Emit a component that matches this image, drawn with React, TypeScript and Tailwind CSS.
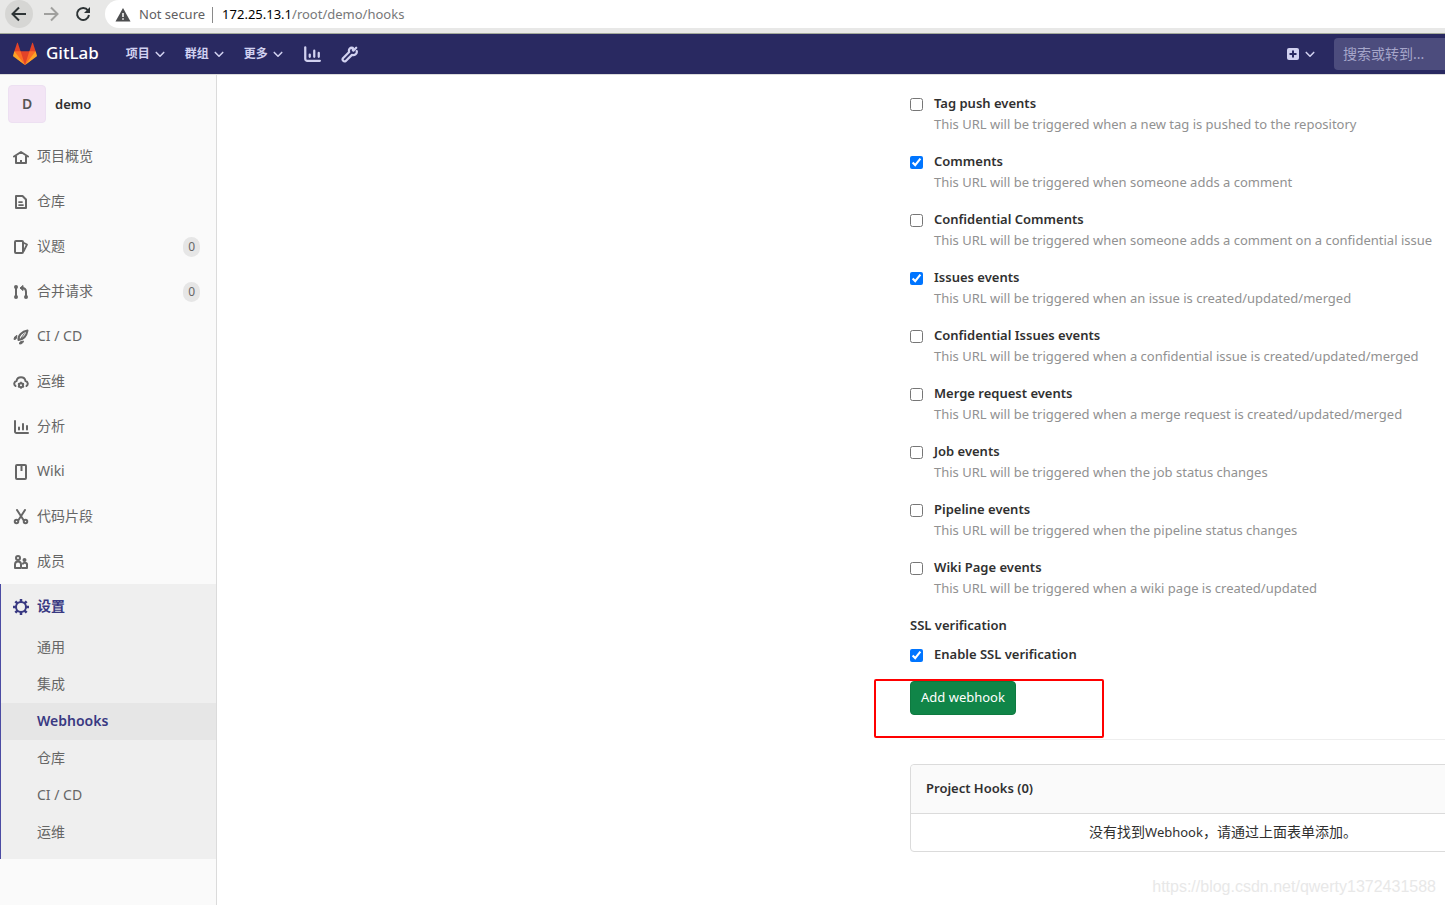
import React, { useState } from 'react';

type IconProps = { children: React.ReactNode; className?: string };

const Icon: React.FC<IconProps> = ({ children, className = 'size-4' }) => (
  <svg
    viewBox="0 0 16 16"
    className={`shrink-0 ${className}`}
    fill="none"
    stroke="currentColor"
    strokeWidth="2"
    aria-hidden="true"
  >
    {children}
  </svg>
);

const ChevronDown = () => (
  <Icon className="size-2.5">
    <path d="M2 5.500l6 6 6-6" strokeWidth="2.500" strokeLinecap="round" strokeLinejoin="round" />
  </Icon>
);

const ChartIcon = ({ className }: { className?: string }) => (
  <Icon className={className}>
    <path d="M2 2v10.500a1.500 1.500 0 0 0 1.500 1.500H15" strokeLinecap="round" />
    <path d="M6 8.500v2M10 5v5.500M14 7v3.500" strokeLinecap="round" />
  </Icon>
);

const icons = {
  home: (
    <Icon>
      <path d="M1 7.500L8 3l7 4.500" strokeLinecap="round" strokeLinejoin="round" />
      <path d="M3 7v7h10V7" strokeLinejoin="round" />
      <path d="M8 11v3" />
    </Icon>
  ),
  file: (
    <Icon>
      <path d="M3 2h6.500L13 5.500V14H3z" strokeLinejoin="round" />
      <path d="M6 8h3M6 11h4" strokeWidth="1.750" strokeLinecap="round" />
    </Icon>
  ),
  issues: (
    <Icon>
      <rect x="2" y="2" width="8" height="12" rx="1" />
      <path d="M10 3.500l4 2L10.500 12.500" strokeWidth="1.750" strokeLinejoin="round" />
    </Icon>
  ),
  merge: (
    <Icon>
      <path d="M3 3v10M13 13V8c0-2.500-1-4-4-4" />
      <circle cx="3" cy="3" r="1" />
      <circle cx="3" cy="13" r="1" />
      <circle cx="13" cy="13" r="1" />
      <path d="M7 4l3-2.500v5z" fill="currentColor" strokeWidth="1" />
    </Icon>
  ),
  rocket: (
    <Icon>
      <path d="M5.500 11C5 6.500 9 2.500 14.500 1.500c-1 5.500-4.500 9-9 9.500z" strokeLinejoin="round" />
      <path d="M8 9l3.500-4.500" strokeWidth="1" />
      <path
        d="M1 10.500C1.200 8.500 2 7 4 6.500L3 10zM6.500 15c2.500 0 3.500-1 4-3L7 13z"
        fill="currentColor"
        strokeWidth="1"
        strokeLinejoin="round"
      />
    </Icon>
  ),
  cloud: (
    <Icon>
      <path
        d="M2.500 12A2.750 2.750 0 0 1 3.500 7a4.600 4.600 0 0 1 9 0 2.750 2.750 0 0 1 1 5"
        strokeLinecap="round"
      />
      <circle cx="8" cy="11.250" r="2" />
      <path d="M8 7.750v1.500M8 13.250v1.500M5 9.500l1.300.75M9.700 12.250l1.300.75M5 13l1.300-.75M9.700 10.250L11 9.500" strokeWidth="1.500" />
    </Icon>
  ),
  chart: <ChartIcon />,
  book: (
    <Icon>
      <rect x="3" y="1" width="10" height="14" rx="1" />
      <path d="M8.500 1v6" strokeWidth="2" />
    </Icon>
  ),
  snippet: (
    <Icon>
      <path d="M4 1l6.500 10M12 1L5.500 11" strokeLinecap="round" />
      <circle cx="3.500" cy="12.500" r="1.750" />
      <circle cx="12.500" cy="12.500" r="1.750" />
    </Icon>
  ),
  users: (
    <Icon>
      <circle cx="5" cy="4" r="2" />
      <path d="M2 14v-3.500a3 3 0 0 1 6 0V14z" strokeLinejoin="round" />
      <circle cx="11.500" cy="6" r="1" />
      <path d="M9 14h5v-2.500a2.250 2.250 0 0 0-4.500-1" strokeLinejoin="round" />
    </Icon>
  ),
  settings: (
    <Icon>
      <circle cx="8" cy="8" r="5" />
      <path
        d="M8 0v3M8 13v3M0 8h3M13 8h3M2.340 2.340l2.120 2.120M11.540 11.540l2.120 2.120M2.340 13.660l2.120-2.120M11.540 4.460l2.120-2.120"
        strokeWidth="2.500"
      />
    </Icon>
  ),
};

const NAV_ITEMS: { label: string; icon: React.ReactNode; count?: number }[] = [
  { label: '项目概览', icon: icons.home },
  { label: '仓库', icon: icons.file },
  { label: '议题', icon: icons.issues, count: 0 },
  { label: '合并请求', icon: icons.merge, count: 0 },
  { label: 'CI / CD', icon: icons.rocket },
  { label: '运维', icon: icons.cloud },
  { label: '分析', icon: icons.chart },
  { label: 'Wiki', icon: icons.book },
  { label: '代码片段', icon: icons.snippet },
  { label: '成员', icon: icons.users },
];

const SETTINGS_ITEMS = ['通用', '集成', 'Webhooks', '仓库', 'CI / CD', '运维'];

const TRIGGERS = [
  { id: 'tag_push', label: 'Tag push events', help: 'This URL will be triggered when a new tag is pushed to the repository', on: false },
  { id: 'note', label: 'Comments', help: 'This URL will be triggered when someone adds a comment', on: true },
  { id: 'confidential_note', label: 'Confidential Comments', help: 'This URL will be triggered when someone adds a comment on a confidential issue', on: false },
  { id: 'issues', label: 'Issues events', help: 'This URL will be triggered when an issue is created/updated/merged', on: true },
  { id: 'confidential_issues', label: 'Confidential Issues events', help: 'This URL will be triggered when a confidential issue is created/updated/merged', on: false },
  { id: 'merge_requests', label: 'Merge request events', help: 'This URL will be triggered when a merge request is created/updated/merged', on: false },
  { id: 'job', label: 'Job events', help: 'This URL will be triggered when the job status changes', on: false },
  { id: 'pipeline', label: 'Pipeline events', help: 'This URL will be triggered when the pipeline status changes', on: false },
  { id: 'wiki_page', label: 'Wiki Page events', help: 'This URL will be triggered when a wiki page is created/updated', on: false },
];

const BrowserBar = () => {
  const [url, setUrl] = useState('/root/demo/hooks');

  return (
    <div className="flex h-[34px] items-start border-b border-[#a3a99a] bg-[#e8e8e7] pl-[5px] text-[13px]">
      <button aria-label="Back" className="flex size-7 items-center justify-center rounded-full bg-[#d6d6d4] text-[#2e3436]">
        <Icon>
          <path d="M15 8H2M8 1.500L1.500 8 8 14.500" />
        </Icon>
      </button>
      <button aria-label="Forward" className="ml-1 flex size-7 items-center justify-center text-[#a0a09e]">
        <Icon>
          <path d="M1 8h13M8 1.500L14.500 8 8 14.500" />
        </Icon>
      </button>
      <button aria-label="Reload" className="ml-1 flex size-7 items-center justify-center text-[#2e3436]">
        <Icon>
          <path d="M13 4.500A6 6 0 1 0 14 9" />
          <path d="M15 1v6H9z" fill="currentColor" stroke="none" />
        </Icon>
      </button>
      <div className="ml-2 flex h-7 flex-1 items-center rounded-l-full bg-white pt-px pl-2.5">
        <svg viewBox="0 0 16 16" className="size-4 shrink-0 fill-[#4c4d4f]" aria-hidden="true">
          <path d="M8 1L.5 14.500h15z" />
          <path d="M7.250 6h1.500v4h-1.500zM7.250 11.250h1.500v1.500h-1.500z" fill="#fff" />
        </svg>
        <span className="ml-2 text-[#5f6062]">Not secure</span>
        <span className="ml-[7px] h-4 w-px bg-[#8a8a8a]" />
        <label htmlFor="address" className="ml-[9px] text-black">
          172.25.13.1
        </label>
        <input
          id="address"
          value={url}
          onChange={(e) => setUrl(e.target.value)}
          className="min-w-0 flex-1 bg-transparent text-[#777879] outline-none"
        />
      </div>
    </div>
  );
};

const GitLabLogo = () => (
  <svg viewBox="0 0 36 36" className="size-6" aria-hidden="true">
    <path fill="#e24329" d="M2 14l9.380 9v-9l-4-12.280c-.205-.632-1.176-.632-1.380 0z" />
    <path fill="#e24329" d="M34 14l-9.380 9v-9l4-12.280c.205-.632 1.176-.632 1.380 0z" />
    <path fill="#e24329" d="M18 34.380L3 14h30z" />
    <path fill="#fc6d26" d="M18 34.380L11.380 14H2l4 11z" />
    <path fill="#fc6d26" d="M18 34.380L24.620 14H34l-4 11z" />
    <path fill="#fca326" d="M2 14L.1 20.160c-.18.565 0 1.200.5 1.560l17.420 12.660z" />
    <path fill="#fca326" d="M34 14l1.900 6.160c.18.565 0 1.200-.5 1.560L18 34.380z" />
  </svg>
);

const Navbar = () => (
  <header className="flex h-10 items-center overflow-hidden bg-[#292961] pl-[13px] text-[#d1d1f0]">
    <a href="#home" className="flex items-center gap-[9px] text-white">
      <GitLabLogo />
      <span className="pb-0.5 text-[17px] font-medium">GitLab</span>
    </a>
    <nav className="ml-[27px] flex items-center gap-5 text-xs font-bold">
      {['项目', '群组', '更多'].map((label) => (
        <button key={label} className="flex items-center gap-[5px]">
          {label}
          <ChevronDown />
        </button>
      ))}
      <a href="#analytics" aria-label="Analytics">
        <ChartIcon className="size-[18px]" />
      </a>
      <a href="#admin" aria-label="Admin area">
        <Icon className="size-[18px]">
          <path
            d="M13.500 2.500L11 5l-.5-.5V2.500C8 2 6.500 4 7.250 6.250l-5.500 5.500a1.800 1.800 0 0 0 2.500 2.500l5.500-5.500C12 9.500 14.500 8 14 5.500"
            strokeLinecap="round"
            strokeLinejoin="round"
          />
        </Icon>
      </a>
    </nav>
    <button aria-label="New" className="ml-auto flex items-center gap-1.5">
      <svg viewBox="0 0 12 12" className="size-3" aria-hidden="true">
        <rect width="12" height="12" rx="2" fill="currentColor" />
        <path d="M6 2.500v7M2.500 6h7" stroke="#292961" strokeWidth="2" />
      </svg>
      <ChevronDown />
    </button>
    <input
      aria-label="搜索"
      placeholder="搜索或转到..."
      className="ml-[19px] h-8 w-[111px] rounded-l bg-[#4c4c7d] pb-0.5 pl-[9px] text-sm outline-none placeholder:text-[#a6a6ca]"
    />
  </header>
);

const Sidebar = () => (
  <aside className="w-[217px] shrink-0 border-r border-[#dbdbdb] bg-[#fafafa] text-sm text-[#666]">
    <a href="#demo" className="mb-px flex h-[58px] items-center gap-[9px] pl-2 text-[13px] font-semibold text-[#303030]">
      <span className="flex size-[38px] items-center justify-center rounded-sm border border-[#ede0f2] bg-[#f3e5f5] text-sm text-[#555]">
        D
      </span>
      demo
    </a>
    <nav>
      {NAV_ITEMS.map(({ label, icon, count }) => (
        <a key={label} href={`#${label}`} className="flex h-[45px] items-center gap-2 pr-4 pl-[13px]">
          {icon}
          <span className="pb-0.5">{label}</span>
          {count !== undefined && (
            <span className="ml-auto rounded-full bg-[#e6e6e6] px-[5px] text-xs leading-5">{count}</span>
          )}
        </a>
      ))}
      <div className="border-l border-[#4b4ba3] bg-[#efefef] pb-2">
        <a href="#settings" className="flex h-[45px] items-center gap-2 pl-3 font-semibold text-[#393982]">
          {icons.settings}
          <span className="pb-0.5">设置</span>
        </a>
        {SETTINGS_ITEMS.map((label) => (
          <a
            key={label}
            href={`#settings-${label}`}
            className={`flex h-[37px] items-center pb-0.5 pl-9 ${label === 'Webhooks' ? 'bg-[#e6e6e6] font-semibold text-[#393982]' : ''}`}
          >
            {label}
          </a>
        ))}
      </div>
    </nav>
  </aside>
);

const HooksForm = () => (
  <form onSubmit={(e) => e.preventDefault()}>
    <ul className="space-y-4">
      {TRIGGERS.map(({ id, label, help, on }) => (
        <li key={id} className="flex items-start gap-[11px]">
          <input id={id} type="checkbox" defaultChecked={on} className="mt-[5px] size-[13px]" />
          <div>
            <label htmlFor={id} className="block font-semibold">
              {label}
            </label>
            <p className="text-[#919191]">{help}</p>
          </div>
        </li>
      ))}
    </ul>
    <fieldset className="mt-4">
      <legend className="font-semibold">SSL verification</legend>
      <div className="mt-2 flex items-start gap-[11px]">
        <input id="ssl" type="checkbox" defaultChecked className="mt-[5px] size-[13px]" />
        <label htmlFor="ssl" className="font-semibold">
          Enable SSL verification
        </label>
      </div>
    </fieldset>
    <div className="relative mt-4">
      <button className="h-[34px] rounded border border-[#0e7a40] bg-[#108548] px-2.5 pb-0.5 text-white">
        Add webhook
      </button>
      {/* highlight frame around the submit button */}
      <div className="pointer-events-none absolute -top-0.5 -left-9 h-[59px] w-[230px] rounded-xs border-2 border-[#f00]" />
    </div>
  </form>
);

const App: React.FC = () => (
  <div className="flex min-h-screen flex-col overflow-hidden bg-white font-['Noto_Sans','Noto_Sans_CJK_SC',sans-serif] text-[#303030]">
    <BrowserBar />
    <Navbar />
    <div className="flex flex-1 border-t border-[#dbdbdb]">
      <Sidebar />
      <main className="relative flex min-w-0 flex-1 overflow-hidden pt-[18px] text-[13px] leading-[21px]">
        {/* the settings column runs past the right edge of the window */}
        <section className="-mr-[91px] ml-auto w-[626px] shrink-0">
          <HooksForm />
          <hr className="mt-6 border-[#eee]" />
          <div className="mt-6 rounded border border-[#dbdbdb]">
            <h2 className="rounded-t border-b border-[#dbdbdb] bg-[#fafafa] px-[15px] pt-[13px] pb-3.5 font-semibold">
              Project Hooks (0)
            </h2>
            <p className="pt-[7px] pb-2 text-center text-sm leading-[21px]">
              没有找到<span className="text-[13px]">Webhook</span>，请通过上面表单添加。
            </p>
          </div>
        </section>
        <span className="absolute right-[9px] bottom-1.5 font-['Liberation_Sans',sans-serif] text-base text-[#e8e8e8]">
          https://blog.csdn.net/qwerty1372431588
        </span>
      </main>
    </div>
  </div>
);

export default App;
